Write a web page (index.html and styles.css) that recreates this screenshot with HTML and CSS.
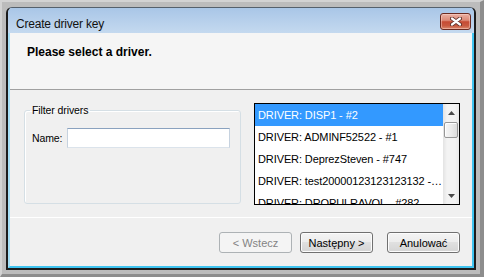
FILE: index.html
```html
<!DOCTYPE html>
<html>
<head>
<meta charset="utf-8">
<link rel="stylesheet" href="styles.css">
</head>
<body>
<div class="screen">
  <div class="window">
    <div class="titlebar">
      <span class="title">Create driver key</span>
      <button class="close" type="button" aria-label="Close">
        <svg width="12" height="9" viewBox="0 0 12 9">
          <path d="M2 1.5 L10 7.5 M10 1.5 L2 7.5" stroke="#5b2c24" stroke-width="4" stroke-linecap="round"/>
          <path d="M2 1.5 L10 7.5 M10 1.5 L2 7.5" stroke="#ffffff" stroke-width="2.2" stroke-linecap="round"/>
        </svg>
      </button>
    </div>
    <div class="client">
      <div class="header">
        <p class="instruction">Please select a driver.</p>
      </div>
      <div class="body">
        <div class="main">
          <fieldset class="group">
            <legend class="legend">Filter drivers</legend>
            <div class="field">
              <label class="label" for="name">Name:</label>
              <input class="text" id="name" type="text">
            </div>
          </fieldset>
          <div class="listbox">
            <ul class="items">
              <li class="item selected">DRIVER: DISP1 - #2</li>
              <li class="item">DRIVER: ADMINF52522 - #1</li>
              <li class="item">DRIVER: DeprezSteven - #747</li>
              <li class="item">DRIVER: test20000123123123132 - #1024</li>
              <li class="item">DRIVER: DROPULRAVOL - #282</li>
            </ul>
            <div class="scrollbar">
              <div class="sb-btn">
                <svg width="7" height="4" viewBox="0 0 7 4"><path d="M0 4 L3.5 0 L7 4 Z" fill="#4a4a4a"/></svg>
              </div>
              <div class="track"><div class="thumb"></div></div>
              <div class="sb-btn">
                <svg width="7" height="4" viewBox="0 0 7 4"><path d="M0 0 L7 0 L3.5 4 Z" fill="#4a4a4a"/></svg>
              </div>
            </div>
          </div>
        </div>
        <div class="footer">
          <button class="btn disabled" type="button">&lt; Wstecz</button>
          <button class="btn default" type="button">Następny &gt;</button>
          <button class="btn cancel" type="button">Anulować</button>
        </div>
      </div>
    </div>
  </div>
</div>
</body>
</html>
```

FILE: styles.css
```css
html, body {
  margin: 0;
  padding: 0;
}

body {
  font-family: "Liberation Sans", Arial, sans-serif;
  color: #000;
}

.screen {
  width: 484px;
  height: 277px;
  box-sizing: border-box;
  border-style: solid;
  border-width: 2px 4px 3px 2px;
  border-color: #d3d3d3 #8d8d8d #8d8d8d #d3d3d3;
  background: #bcbcbc;
  padding: 5px 4px 4px 4px;
}

.window {
  height: 100%;
  box-sizing: border-box;
  border: 2px solid #1c1c1c;
  border-top: 1px solid #55606c;
  border-radius: 6px 6px 0 0;
  display: flex;
  flex-direction: column;
  overflow: hidden;
  background: #c4d8ef;
}

.titlebar {
  height: 25px;
  flex: none;
  display: flex;
  justify-content: space-between;
  align-items: flex-start;
  padding-left: 8px;
  background: linear-gradient(#a9c6e7, #c4d9ef);
}

.title {
  font-size: 12px;
  line-height: 14px;
  padding-top: 9px;
  letter-spacing: -0.2px;
  color: #111;
}

.close {
  width: 31px;
  height: 17px;
  margin: 5px 3px 0 0;
  padding: 0;
  border: 1px solid #6b2a20;
  border-radius: 3px;
  background: linear-gradient(#eab0a2 0%, #dc8a77 42%, #c64b33 52%, #c85a40 78%, #dc8a6e 100%);
  box-shadow: inset 0 0 0 1px rgba(255, 220, 210, 0.45);
  display: flex;
  align-items: center;
  justify-content: center;
}

.client {
  flex: 1;
  display: flex;
  flex-direction: column;
  border-style: solid;
  border-width: 0 2px 2px 2px;
  border-color: #40c4f0 #40c4f0 #40c4f0 #a6def5;
  background: #f0f0f0;
}

.header {
  height: 56px;
  flex: none;
  box-sizing: content-box;
  background: #f5f5f5;
  border-bottom: 1px solid #a0a0a0;
  padding: 0 0 0 17px;
}

.instruction {
  margin: 0;
  padding-top: 12px;
  font-size: 12px;
  line-height: 14px;
  font-weight: bold;
}

.body {
  flex: 1;
  display: flex;
  flex-direction: column;
}

.main {
  box-sizing: border-box;
  border-bottom: 1px solid #a0a0a0;
  height: 128px;
  display: flex;
  align-items: flex-start;
  gap: 13px;
  padding: 13px 0 0 14px;
}

.group {
  margin: 1px 0 0 0;
  width: 217px;
  height: 100px;
  box-sizing: border-box;
  border: 1px solid #d5dfe5;
  border-radius: 3px;
  padding: 12px 0 0 5px;
  box-shadow: inset 1px 1px 0 #fff;
}

.legend {
  padding: 0 2px;
  font-size: 10.5px;
  line-height: 12px;
  letter-spacing: -0.1px;
}

.field {
  display: flex;
  align-items: center;
  margin-left: 2px;
}

.label {
  width: 35px;
  font-size: 10.5px;
  letter-spacing: -0.1px;
}

.text {
  width: 163px;
  height: 20px;
  box-sizing: border-box;
  margin: 0;
  padding: 0 2px;
  border: 1px solid;
  border-color: #8aa2bf #c6d2df #dbe3eb #c6d2df;
  background: #fff;
  font: 10.5px "Liberation Sans", Arial, sans-serif;
}

.listbox {
  width: 206px;
  height: 102px;
  box-sizing: border-box;
  border: 1px solid #000;
  background: #fff;
  display: flex;
  overflow: hidden;
}

.items {
  flex: 1;
  min-width: 0;
  margin: 0;
  padding: 0;
  list-style: none;
  overflow: hidden;
}

.item {
  height: 22px;
  line-height: 22px;
  padding-left: 3px;
  font-size: 11px;
  letter-spacing: -0.1px;
  white-space: nowrap;
  overflow: hidden;
  text-overflow: ellipsis;
}

.item.selected {
  background: #3399ff;
  color: #fff;
}

.scrollbar {
  width: 16px;
  flex: none;
  display: flex;
  flex-direction: column;
  background: linear-gradient(to right, #e3e3e3, #f3f3f3 25%, #f3f3f3 75%, #e9e9e9);
}

.sb-btn {
  height: 17px;
  flex: none;
  display: flex;
  align-items: center;
  justify-content: center;
}

.track {
  flex: 1;
}

.thumb {
  margin: 1px 1px 0 1px;
  height: 16px;
  box-sizing: border-box;
  border: 1px solid #979797;
  border-radius: 2px;
  background: linear-gradient(to right, #f6f6f6, #ececec 50%, #dcdcdc);
  box-shadow: inset 1px 1px 0 #fff;
}

.footer {
  flex: 1;
  display: flex;
  align-items: flex-start;
  justify-content: flex-end;
  padding: 14px 12px 0 0;
  border-top: 1px solid #fff;
  margin-top: -1px;
}

.btn {
  width: 73px;
  height: 21px;
  margin: 0 0 0 8px;
  padding: 0;
  box-sizing: border-box;
  border: 1px solid #707070;
  border-radius: 3px;
  background: linear-gradient(#f4f4f4 0%, #ececec 50%, #e0e0e0 50%, #d4d4d4 100%);
  box-shadow: inset 0 0 0 1px #fcfcfc;
  font: 11px "Liberation Sans", Arial, sans-serif;
  color: #000;
}

.btn.cancel {
  margin-left: 14px;
}

.btn.disabled {
  border-color: #adb2b5;
  background: #f4f4f4;
  box-shadow: none;
  color: #838383;
}
```
